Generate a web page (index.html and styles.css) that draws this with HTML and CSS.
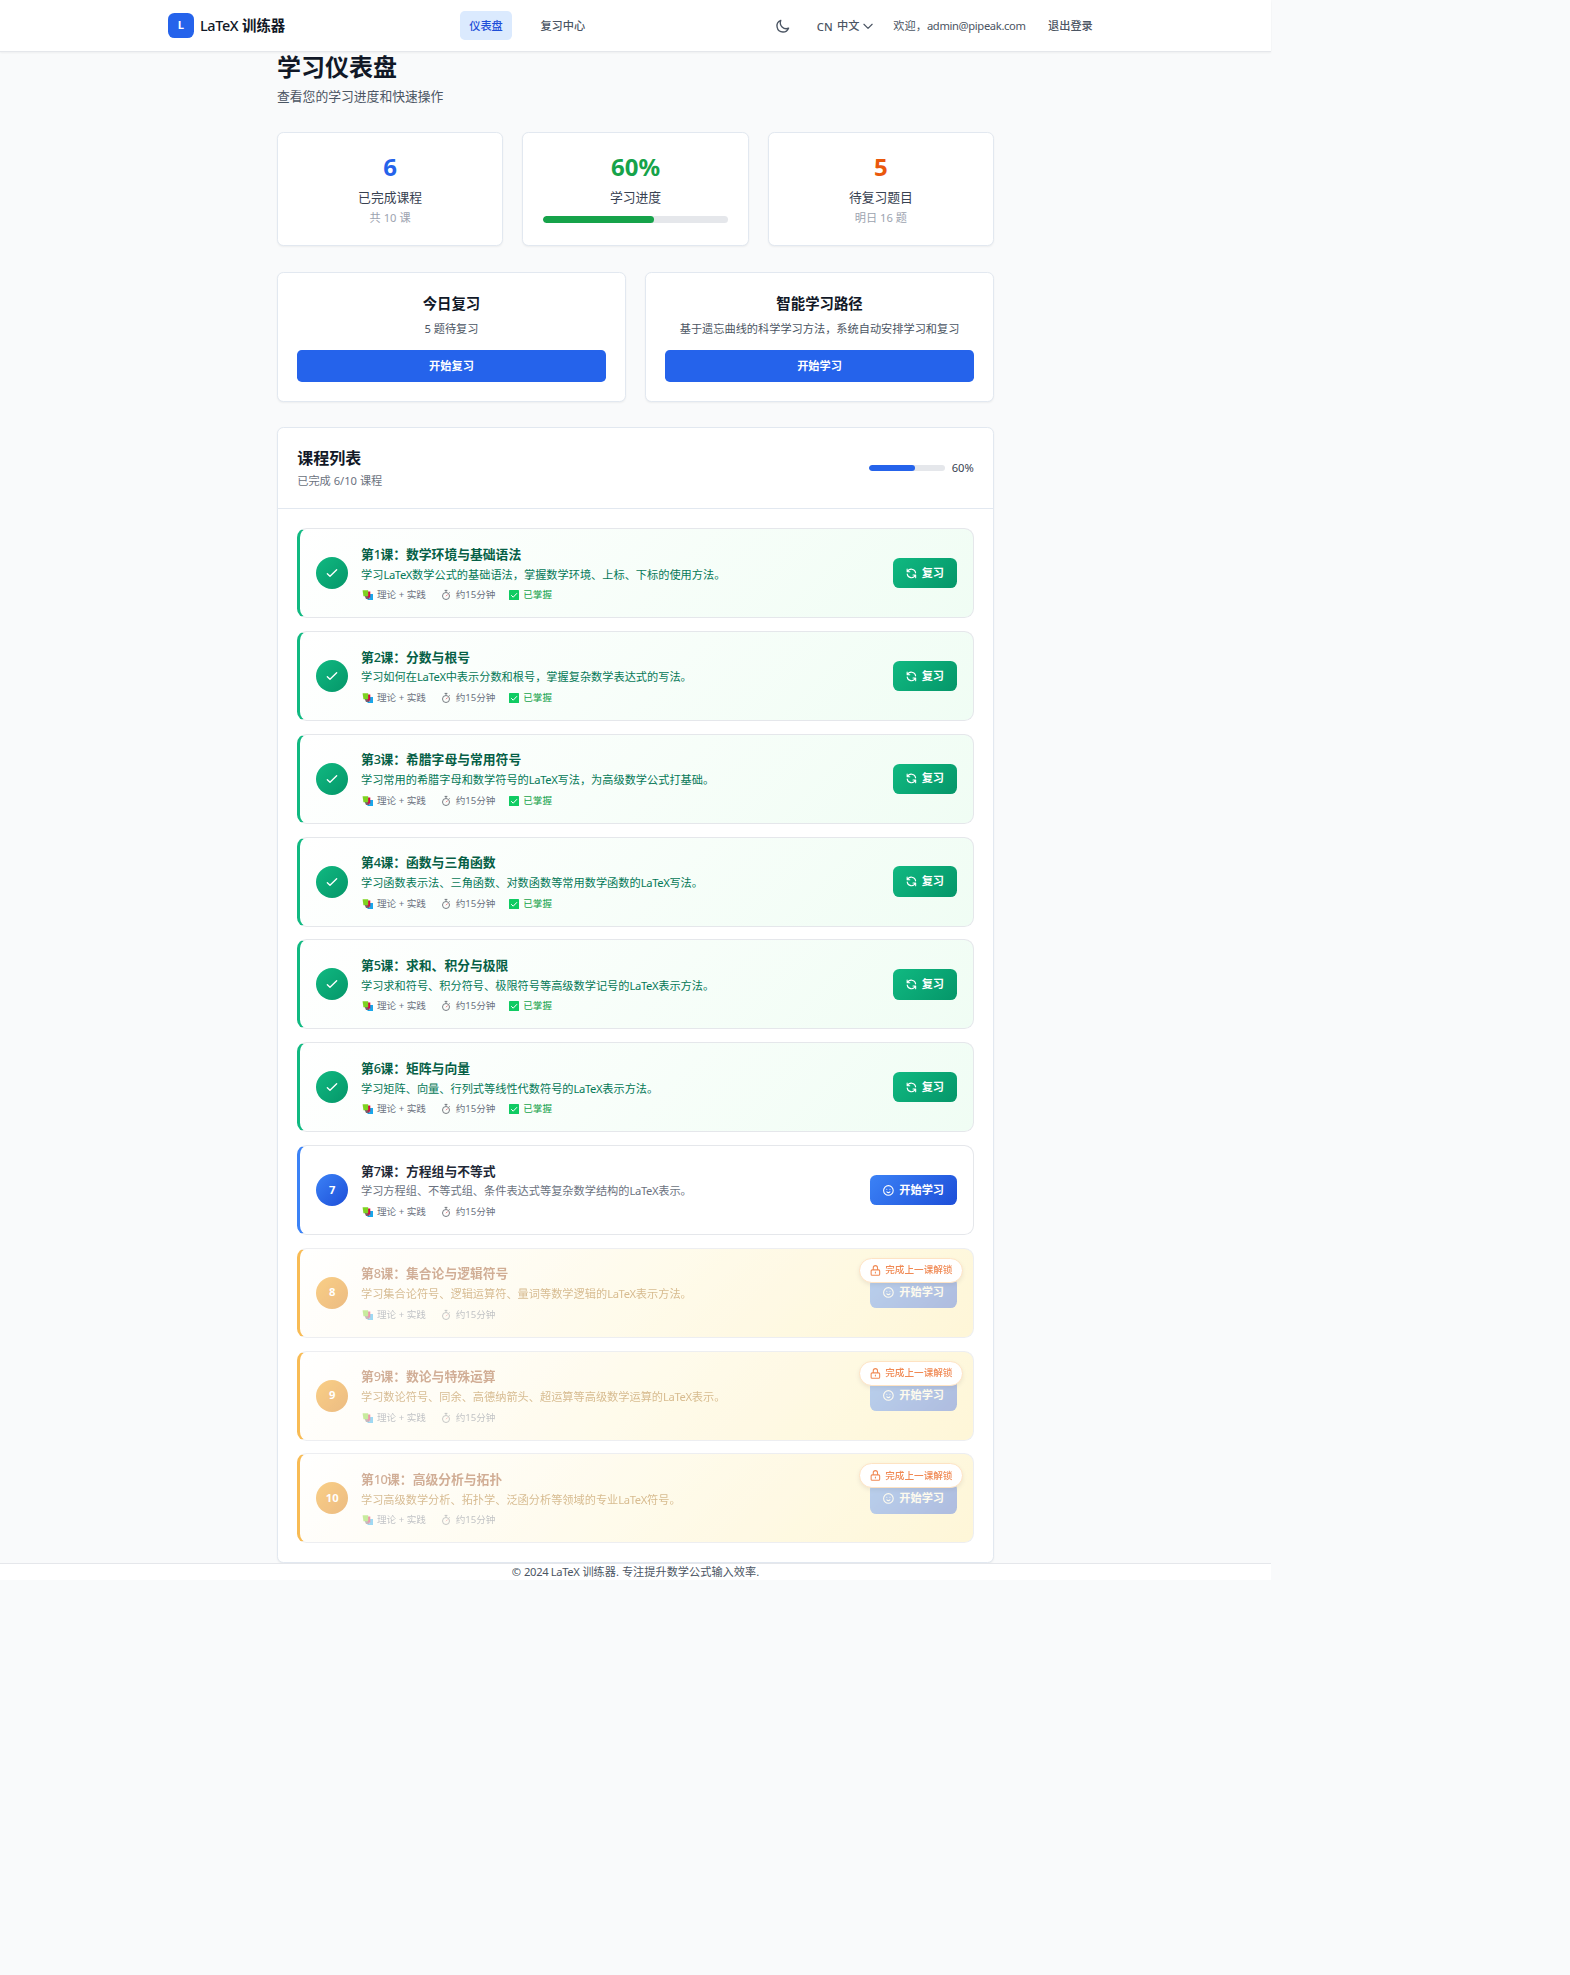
FILE: index.html
```html
<!DOCTYPE html>
<html lang="zh-CN">
<head>
<meta charset="utf-8">
<title>LaTeX 训练器</title>
<link rel="stylesheet" href="styles.css">
</head>
<body>
<svg class="sprite" aria-hidden="true">
  <symbol id="books" viewBox="0 0 12 12"><path fill="#19a7ea" d="M7.5 5H11v6H5.5v-1h2z"/><path fill="#75606f" d="M2.5 6.5h5V10H4z"/><path fill="#d50b45" d="M5.5 2.5H8.3V8.5H5.5z"/><path fill="#7ed321" d="M.6 1.3H6.2v5.9H1.4z"/></symbol>
  <symbol id="timer" viewBox="0 0 12 12"><g fill="none" stroke="#6a6f76" stroke-width=".9"><circle cx="6" cy="7" r="3.5"/><path d="M4.6 1.4h2.8M6 1.2v2M9.2 3.2l.6.6"/><path stroke="#e8646a" d="M6 7.2l1.7-1.7"/></g></symbol>
  <symbol id="done" viewBox="0 0 12 12"><rect x="1" y="1" width="10" height="10" rx=".6" fill="#0fcb62"/><path d="M3.2 6.2l2 2 3.8-4" fill="none" stroke="#fff"/></symbol>
  <symbol id="check" viewBox="0 0 24 24"><path d="M5 13l4 4L19 7" fill="none" stroke="currentColor" stroke-width="2" stroke-linecap="round" stroke-linejoin="round"/></symbol>
  <symbol id="refresh" viewBox="0 0 24 24"><path d="M4 4v5h.582m15.356 2A8.001 8.001 0 004.582 9m0 0H9m11 11v-5h-.581m0 0a8.003 8.003 0 01-15.357-2m15.357 2H15" fill="none" stroke="currentColor" stroke-width="2" stroke-linecap="round" stroke-linejoin="round"/></symbol>
  <symbol id="smile" viewBox="0 0 24 24"><path d="M14.828 14.828a4 4 0 01-5.656 0M9 10h.01M15 10h.01M21 12a9 9 0 11-18 0 9 9 0 0118 0z" fill="none" stroke="currentColor" stroke-width="2" stroke-linecap="round" stroke-linejoin="round"/></symbol>
  <symbol id="lock" viewBox="0 0 24 24"><path d="M12 15v2m-6 4h12a2 2 0 002-2v-6a2 2 0 00-2-2H6a2 2 0 00-2 2v6a2 2 0 002 2zm10-10V7a4 4 0 00-8 0v4h8z" fill="none" stroke="currentColor" stroke-width="2" stroke-linecap="round" stroke-linejoin="round"/></symbol>
</svg>
<div class="page">
  <header class="topbar">
    <div class="topbar-inner">
      <div class="brand"><span class="brand-mark">L</span><span class="brand-name"><span class="latin">LaTeX</span> 训练器</span></div>
      <nav class="nav"><a class="nav-link active">仪表盘</a><a class="nav-link">复习中心</a></nav>
      <div class="tools">
        <svg class="moon" viewBox="0 0 24 24"><path d="M20.354 15.354A9 9 0 018.646 3.646 9.003 9.003 0 0012 21a9.003 9.003 0 008.354-5.646z" fill="none" stroke="currentColor" stroke-width="2" stroke-linecap="round" stroke-linejoin="round"/></svg>
        <div class="lang"><span class="lang-code">CN</span><span>中文</span><svg class="chevron" viewBox="0 0 24 24"><path d="M19 9l-7 7-7-7" fill="none" stroke="currentColor" stroke-width="2" stroke-linecap="round" stroke-linejoin="round"/></svg></div>
        <span class="welcome">欢迎，<span class="latin">admin@pipeak.com</span></span>
        <a class="logout">退出登录</a>
      </div>
    </div>
  </header>
  <main class="main">
    <h1 class="title">学习仪表盘</h1>
    <p class="subtitle">查看您的学习进度和快速操作</p>
    <section class="stats">
      <div class="card stat"><div class="num blue">6</div><div class="label">已完成课程</div><div class="hint">共 10 课</div></div>
      <div class="card stat"><div class="num green">60%</div><div class="label">学习进度</div><div class="bar stat-bar"><div class="fill fill-green" style="width:60%"></div></div></div>
      <div class="card stat"><div class="num orange">5</div><div class="label">待复习题目</div><div class="hint">明日 16 题</div></div>
    </section>
    <section class="actions">
      <div class="card action"><h3>今日复习</h3><p>5 题待复习</p><button class="primary">开始复习</button></div>
      <div class="card action"><h3>智能学习路径</h3><p>基于遗忘曲线的科学学习方法，系统自动安排学习和复习</p><button class="primary">开始学习</button></div>
    </section>
    <section class="card courses">
      <div class="courses-head">
        <div><h2>课程列表</h2><p>已完成 6/10 课程</p></div>
        <div class="overall"><div class="bar overall-bar"><div class="fill fill-blue" style="width:60%"></div></div><span>60%</span></div>
      </div>
      <div class="list" id="list"></div>
    </section>
  </main>
  <footer class="footer">© <span class="latin">2024 LaTeX</span> 训练器. 专注提升数学公式输入效率.</footer>
</div>
<script src="app.js"></script>
</body>
</html>
```
FILE: styles.css
```css
* { box-sizing: border-box; margin: 0; padding: 0; }
html { font-size: 12.8px; }
body { background: #f9fafb; color: #111827; font-family: "Noto Sans", "Noto Sans CJK SC", sans-serif; font-size: 1rem; line-height: 1.5; }
.sprite { display: none; }
svg { display: block; flex: none; }
.page { width: 1271px; }
.latin { letter-spacing: -.35px; }

.topbar { background: #fff; border-bottom: 1px solid #e5e7eb; box-shadow: 0 1px 2px rgba(0,0,0,.05); }
.topbar-inner { width: 935px; height: 4rem; margin: 0 auto; display: flex; align-items: center; font-size: .875rem; font-weight: 500; color: #4b5563; }
.brand { display: flex; align-items: center; gap: .5rem; width: 292px; }
.brand-mark { width: 2rem; height: 2rem; border-radius: .5rem; background: #2563eb; color: #fff; font-weight: 700; font-size: .875rem; display: flex; align-items: center; justify-content: center; }
.brand-name { font-size: 1.125rem; font-weight: 600; color: #111827; }
.brand-name .latin { font-weight: 500; }
.nav { display: flex; gap: 1.5rem; }
.nav-link { padding: 1px .72rem 0; height: 2.25rem; line-height: 2.25rem; border-radius: .375rem; }
.nav-link.active { background: #dbeafe; color: #1d4ed8; }
.tools { margin-left: auto; display: flex; align-items: center; padding: 1px .8rem 0 0; }
.moon { width: 1.25rem; height: 1.25rem; margin-right: 2.05rem; }
.lang { display: flex; align-items: center; gap: .35rem; margin-right: 1.4rem; }
.lang-code { padding-top: 2px; }
.chevron { width: 1.1rem; height: 1.1rem; margin-left: -.2rem; }
.welcome { font-weight: 400; margin-right: 1.75rem; }

.main { width: 717px; margin: 0 auto; }
.title { font-size: 1.875rem; line-height: 2.25rem; font-weight: 700; padding-top: 1px; margin-bottom: 5.4px; }
.subtitle { color: #4b5563; margin-bottom: 2rem; }
.card { background: #fff; border: 1px solid #e2e8f0; border-radius: .5rem; box-shadow: 0 1px 2px rgba(0,0,0,.05); }
.stats { display: grid; grid-template-columns: repeat(3, 1fr); gap: 1.5rem; margin-bottom: 2rem; }
.stat { padding: 1.5rem; text-align: center; }
.num { font-size: 1.875rem; line-height: 2.25rem; font-weight: 700; padding-top: 1px; margin-bottom: 5.4px; }
.blue { color: #2563eb; }
.green { color: #16a34a; }
.orange { color: #ea580c; }
.label { color: #374151; }
.hint { font-size: .875rem; line-height: 1.25rem; margin-top: .25rem; color: #9ca3af; }
.bar { height: .5rem; border-radius: 1rem; background: #e5e7eb; overflow: hidden; }
.fill { height: 100%; border-radius: 1rem; }
.fill-green { background: #16a34a; }
.fill-blue { background: #2563eb; }
.stat-bar { margin-top: .75rem; }

.actions { display: grid; grid-template-columns: 1fr 1fr; gap: 1.5rem; margin-bottom: 2rem; }
.action { padding: 1.5rem 1.5rem 18.6px; text-align: center; }
.action h3 { font-size: 1.125rem; line-height: 1.75rem; font-weight: 600; padding-top: 1px; margin-bottom: 5.4px; }
.action p { font-size: .875rem; line-height: 1.25rem; color: #4b5563; margin-bottom: 13.4px; }
.primary { display: block; width: 100%; height: 2.5rem; border: 0; border-radius: .375rem; background: #2563eb; color: #fff; font: 600 .875rem/2.5rem "Noto Sans", "Noto Sans CJK SC", sans-serif; }

.courses-head { padding: 1.5rem; border-bottom: 1px solid #e2e8f0; display: flex; justify-content: space-between; align-items: center; }
.courses-head h2 { font-size: 1.25rem; line-height: 1.75rem; font-weight: 600; }
.courses-head p { font-size: .875rem; line-height: 1.25rem; color: #6b7280; margin-top: .25rem; }
.overall { display: flex; align-items: center; gap: .5rem; font-size: .875rem; color: #374151; }
.overall-bar { width: 6rem; }
.list { padding: 19px 1.5rem 19px; display: grid; gap: 1rem; }

.lesson { position: relative; height: 90px; padding: 0 16px; display: flex; align-items: center; gap: 1rem; border: 1px solid #e5e7eb; border-left: 3px solid #3b82f6; border-radius: .75rem; background: #fff; }
.lesson.completed { border-left-color: #10b981; background: linear-gradient(135deg, #fff 0%, #f0fdf4 100%); }
.lesson.locked { border-left-color: #f59e0b; background: linear-gradient(135deg, #fff 0%, #fef3c7 100%); opacity: .7; }
.badge { width: 32px; height: 32px; flex: none; border-radius: 50%; display: flex; align-items: center; justify-content: center; color: #fff; font-size: .875rem; font-weight: 700; background: linear-gradient(135deg, #3b82f6, #1d4ed8); }
.badge svg { width: 16px; height: 16px; }
.completed .badge { background: linear-gradient(135deg, #10b981, #059669); }
.locked .badge { background: linear-gradient(135deg, #f59e0b, #d97706); opacity: .7; }
.info { flex: 1; height: 56px; }
.info h4 { font-size: 1rem; line-height: 17.6px; font-weight: 600; color: #1f2937; padding-top: .6px; margin-bottom: 3.2px; }
.info h4 .num-inline { font-weight: 500; letter-spacing: -.7px; }
.info p { font-size: .875rem; line-height: 16px; color: #6b7280; margin-bottom: 5.6px; }
.completed h4 { color: #065f46; }
.completed p { color: #047857; }
.locked h4 { color: #92400e; }
.locked p { color: #a16207; }
.locked .info { opacity: .6; }
.meta { display: flex; gap: 1rem; font-size: .75rem; line-height: 14px; color: #6b7280; }
.meta span { display: flex; align-items: center; gap: 3px; }
.meta svg { width: 12px; height: 12px; margin-left: 1px; }
.meta .time { gap: 4px; }
.meta .mastered { color: #16a34a; margin-left: -1px; }
.go { display: flex; align-items: center; gap: 4px; height: 30.4px; padding: 0 1rem 0 12px; border: 0; border-radius: .5rem; color: #fff; font: 600 .875rem/1.5 "Noto Sans", "Noto Sans CJK SC", sans-serif; background: linear-gradient(135deg, #3b82f6, #1d4ed8); }
.go svg { width: 1rem; height: 1rem; }
.completed .go { background: linear-gradient(135deg, #10b981, #059669); }
.locked .go { opacity: .5; }
.unlock { position: absolute; top: 9px; right: 10px; height: 25px; padding: 0 9.4px 0 9px; display: flex; align-items: center; gap: 3.5px; border: 1px solid #fed7aa; border-radius: 1rem; background: #fff; color: #ea580c; font-size: .75rem; font-weight: 500; box-shadow: 0 2px 4px rgba(0,0,0,.1); }
.unlock svg { width: 1rem; height: 1rem; }

.footer { background: #fff; border-top: 1px solid #e5e7eb; text-align: center; font-size: .875rem; line-height: 1.25rem; color: #4b5563; }
```
FILE: app.js
```js
const lessons = [
  ["数学环境与基础语法", "学习LaTeX数学公式的基础语法，掌握数学环境、上标、下标的使用方法。"],
  ["分数与根号", "学习如何在LaTeX中表示分数和根号，掌握复杂数学表达式的写法。"],
  ["希腊字母与常用符号", "学习常用的希腊字母和数学符号的LaTeX写法，为高级数学公式打基础。"],
  ["函数与三角函数", "学习函数表示法、三角函数、对数函数等常用数学函数的LaTeX写法。"],
  ["求和、积分与极限", "学习求和符号、积分符号、极限符号等高级数学记号的LaTeX表示方法。"],
  ["矩阵与向量", "学习矩阵、向量、行列式等线性代数符号的LaTeX表示方法。"],
  ["方程组与不等式", "学习方程组、不等式组、条件表达式等复杂数学结构的LaTeX表示。"],
  ["集合论与逻辑符号", "学习集合论符号、逻辑运算符、量词等数学逻辑的LaTeX表示方法。"],
  ["数论与特殊运算", "学习数论符号、同余、高德纳箭头、超运算等高级数学运算的LaTeX表示。"],
  ["高级分析与拓扑", "学习高级数学分析、拓扑学、泛函分析等领域的专业LaTeX符号。"]
];
const icon = id => `<svg><use href="#${id}"/></svg>`;
document.getElementById("list").innerHTML = lessons.map(([name, text], i) => {
  const n = i + 1;
  const state = n <= 6 ? "completed" : n === 7 ? "current" : "locked";
  const done = state === "completed";
  return `<article class="lesson ${state}">
    <div class="badge">${done ? icon("check") : n}</div>
    <div class="info"><h4>第<span class="num-inline">${n}</span>课：${name}</h4><p>${text.replace("LaTeX", '<span class="latin">LaTeX</span>')}</p>
      <div class="meta"><span>${icon("books")}理论 + 实践</span><span class="time">${icon("timer")}约15分钟</span>${done ? `<span class="mastered">${icon("done")}已掌握</span>` : ""}</div></div>
    <button class="go">${icon(done ? "refresh" : "smile")}${done ? "复习" : "开始学习"}</button>
    ${state === "locked" ? `<div class="unlock">${icon("lock")}完成上一课解锁</div>` : ""}
  </article>`;
}).join("");
```
